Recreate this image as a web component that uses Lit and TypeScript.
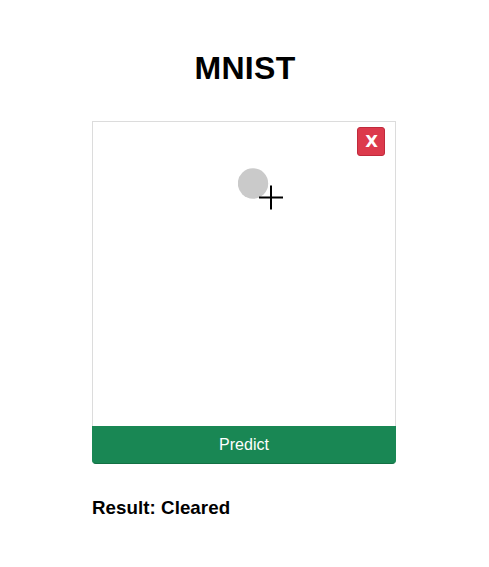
import { LitElement, html, css } from "lit";
import { customElement, state } from "lit/decorators.js";

@customElement("app-root")
export class AppRoot extends LitElement {
  static styles = css`
    :host {
      display: block;
      box-sizing: border-box;
      min-height: 567px;
      padding-top: 50px;
      background: #fff;
      color: #000;
      font-family: "Liberation Sans", Arial, sans-serif;
    }
    .page {
      width: 304px;
      margin-left: 92px;
    }
    h1 {
      margin: 0 0 34px;
      padding-left: 2px;
      font-size: 32px;
      line-height: 37px;
      letter-spacing: 0.3px;
      text-align: center;
    }
    .board {
      position: relative;
      box-sizing: border-box;
      height: 305px;
      border: 1px solid #dcdcdc;
      border-bottom: 0;
    }
    .clear {
      position: absolute;
      top: 5px;
      right: 10px;
      box-sizing: border-box;
      width: 28px;
      height: 29px;
      padding: 0 0 1px 1px;
      border: 1px solid #c02a3c;
      border-radius: 3px;
      background: #dc3a4c;
      color: #fff;
      font: bold 16.5px/25px "DejaVu Sans", sans-serif;
      text-align: center;
    }
    .ink {
      position: absolute;
      left: 145px;
      top: 46px;
    }
    .predict {
      display: block;
      width: 100%;
      height: 38px;
      padding: 0;
      border: 1px solid #198754;
      border-bottom-color: #137044;
      border-radius: 0 0 4px 4px;
      background: #198754;
      color: #fff;
      font: 16px/36px "Liberation Sans", Arial, sans-serif;
    }
    h3 {
      margin: 32px 0 0;
      font-size: 18.72px;
      line-height: 23px;
      letter-spacing: 0.06px;
    }
  `;

  @state() private result = "Cleared";

  render() {
    return html`
      <main class="page">
        <h1>MNIST</h1>
        <div class="board">
          <svg class="ink" width="47" height="44" viewBox="0 0 47 44">
            <circle cx="15" cy="15.5" r="15.2" fill="#cacaca" />
            <path d="M21 29.5H45M33 17.5V41.5" stroke="#000" stroke-width="2" fill="none" />
          </svg>
          <button class="clear">X</button>
        </div>
        <button class="predict">Predict</button>
        <h3>Result: ${this.result}</h3>
      </main>
    `;
  }
}
